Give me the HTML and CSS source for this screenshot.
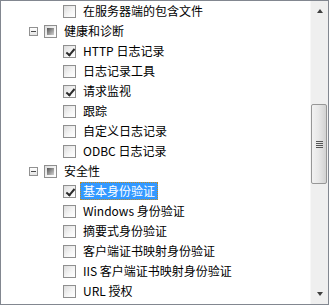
FILE: index.html
```html
<!DOCTYPE html>
<html lang="zh-CN">
<head>
  <meta charset="UTF-8" />
  <title>Windows 功能</title>
  <link rel="stylesheet" href="styles.css">
</head>
<body>
  <div class="tree-box">
    <ul class="tree">
      <li class="row lvl2"><span class="cb"></span><span class="label">在服务器端的包含文件</span></li>
      <li class="row lvl1"><span class="exp"></span><span class="cb partial"></span><span class="label">健康和诊断</span></li>
      <li class="row lvl2"><span class="cb checked"></span><span class="label">HTTP 日志记录</span></li>
      <li class="row lvl2"><span class="cb"></span><span class="label">日志记录工具</span></li>
      <li class="row lvl2"><span class="cb checked"></span><span class="label">请求监视</span></li>
      <li class="row lvl2"><span class="cb"></span><span class="label">跟踪</span></li>
      <li class="row lvl2"><span class="cb"></span><span class="label">自定义日志记录</span></li>
      <li class="row lvl2"><span class="cb"></span><span class="label">ODBC 日志记录</span></li>
      <li class="row lvl1"><span class="exp"></span><span class="cb partial"></span><span class="label">安全性</span></li>
      <li class="row lvl2"><span class="cb checked"></span><span class="label selected">基本身份验证</span></li>
      <li class="row lvl2"><span class="cb"></span><span class="label">Windows 身份验证</span></li>
      <li class="row lvl2"><span class="cb"></span><span class="label">摘要式身份验证</span></li>
      <li class="row lvl2"><span class="cb"></span><span class="label">客户端证书映射身份验证</span></li>
      <li class="row lvl2"><span class="cb"></span><span class="label">IIS 客户端证书映射身份验证</span></li>
      <li class="row lvl2"><span class="cb"></span><span class="label">URL 授权</span></li>
    </ul>
    <div class="scrollbar">
      <div class="arrow up"></div>
      <div class="track">
        <div class="thumb"><span class="grip"></span></div>
      </div>
      <div class="arrow down"></div>
    </div>
  </div>
</body>
</html>
```

FILE: styles.css
```css
body {
  margin: 0;
  font-family: "Segoe UI", "Noto Sans CJK SC", "Noto Sans", sans-serif;
  font-size: 12px;
  color: #000;
  background: #fff;
}
.tree-box {
  width: 329px;
  height: 305px;
  box-sizing: border-box;
  border: 1px solid #828790;
  display: flex;
  overflow: hidden;
}
.tree {
  flex: 1;
  list-style: none;
  margin: 0;
  padding: 0;
}
.row {
  height: 20px;
  display: flex;
  align-items: center;
  white-space: nowrap;
}
.lvl1 {
  padding-left: 28px;
}
.lvl2 {
  padding-left: 62px;
}
.exp {
  width: 9px;
  height: 9px;
  box-sizing: border-box;
  border: 1px solid #919191;
  background: linear-gradient(#ffffff, #e4e4e4);
  margin-right: 6px;
  position: relative;
}
.exp::after {
  content: "";
  position: absolute;
  left: 1px;
  top: 3px;
  width: 5px;
  height: 1px;
  background: #4b4b4b;
}
.cb {
  width: 13px;
  height: 13px;
  box-sizing: border-box;
  border: 1px solid #8f8f8f;
  background: linear-gradient(135deg, #dcdcdc, #f6f6f6 60%, #ffffff);
  position: relative;
}
.cb.partial::after {
  content: "";
  position: absolute;
  left: 2px;
  top: 2px;
  width: 7px;
  height: 7px;
  background: linear-gradient(135deg, #4f4f4f, #9a9a9a 55%, #d0d0d0);
}
.cb.checked::after {
  content: "";
  position: absolute;
  left: 4px;
  top: 1px;
  width: 3px;
  height: 7px;
  border: solid #2b2b2b;
  border-width: 0 2px 2px 0;
  transform: rotate(40deg);
}
.label {
  margin-left: 4px;
  padding: 1px 2px;
  border: 1px solid transparent;
  line-height: 14px;
}
.label.selected {
  background: #3399ff;
  color: #fff;
  border: 1px dotted #c58a1c;
}
.scrollbar {
  width: 17px;
  background: #efefef;
  border-left: 1px solid #f7f7f7;
  display: flex;
  flex-direction: column;
}
.arrow {
  height: 20px;
  display: flex;
  align-items: center;
  justify-content: center;
}
.arrow::after {
  content: "";
  width: 0;
  height: 0;
  border-left: 3px solid transparent;
  border-right: 3px solid transparent;
}
.arrow.up::after {
  border-bottom: 4px solid #404040;
}
.arrow.down::after {
  border-top: 4px solid #404040;
}
.track {
  flex: 1;
  padding-top: 83px;
}
.thumb {
  height: 80px;
  box-sizing: border-box;
  margin: 0 1px 0 0;
  border: 1px solid #979797;
  border-radius: 2px;
  background: linear-gradient(90deg, #f2f2f2, #e8e8e8 45%, #d2d2d2);
  display: flex;
  align-items: center;
  justify-content: center;
}
.grip {
  width: 7px;
  height: 7px;
  background: repeating-linear-gradient(#555 0 1px, transparent 1px 2px);
}
```
